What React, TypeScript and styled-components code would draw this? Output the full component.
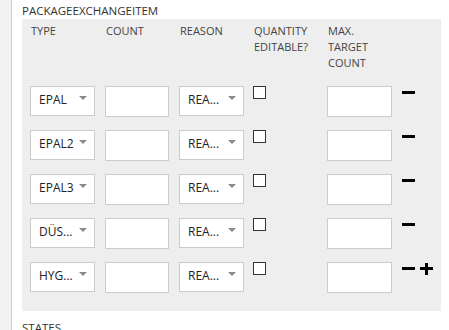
import React from "react";
import styled, { createGlobalStyle } from "styled-components";

const GlobalStyle = createGlobalStyle`
  html, body { margin: 0; padding: 0; background: #ffffff; }
  body { font-family: "Open Sans", "Noto Sans", sans-serif; color: #333; }
`;

const Page = styled.div`
  display: flex;
  width: 449px;
  height: 330px;
  overflow: hidden;
`;

const SideStrip = styled.div`
  width: 11px;
  flex: none;
  background: #f2f2f2;
  border-right: 1px solid #cfcfcf;
`;

const Content = styled.div`
  flex: 1;
  padding: 3px 0 0 10px;
  display: flex;
  flex-direction: column;
`;

const SectionTitle = styled.div`
  font-size: 11.5px;
  line-height: 16px;
  height: 18px;
  color: #333;
  text-transform: uppercase;
  letter-spacing: 0;
`;

const Panel = styled.div`
  width: 411px;
  background: #eeeeee;
  padding: 4px 0 18px 8px;
  margin-bottom: 9px;
`;

const Grid = styled.div`
  display: grid;
  grid-template-columns: 75px 74px 74px 74px 75px 1fr;
  row-gap: 13px;
  align-items: start;
`;

const HeaderCell = styled.div`
  font-size: 11px;
  line-height: 16px;
  color: #444;
  text-transform: uppercase;
  padding-left: 1px;
  height: 48px;
  margin-bottom: 2px;
`;

const Select = styled.div`
  box-sizing: border-box;
  width: 65px;
  height: 30px;
  background: #fff;
  border: 1px solid #cccccc;
  display: flex;
  align-items: center;
  padding: 0 7px 2px 8px;
`;

const SelectText = styled.span`
  flex: 1;
  font-size: 12px;
  line-height: 16px;
  color: #222;
  white-space: nowrap;
  overflow: hidden;
`;

const Arrow = styled.span`
  flex: none;
  width: 0;
  height: 0;
  border-left: 4px solid transparent;
  border-right: 4px solid transparent;
  border-top: 4px solid #8a8a8a;
  margin-bottom: 4px;
`;

const TextInput = styled.input<{ $w: number }>`
  box-sizing: border-box;
  width: ${(p) => p.$w}px;
  height: 31px;
  margin: 0;
  padding: 0 6px;
  background: #fff;
  border: 1px solid #cccccc;
  border-radius: 0;
  outline: none;
  font-family: inherit;
  font-size: 12px;
`;

const CheckBox = styled.span`
  display: block;
  box-sizing: border-box;
  width: 13px;
  height: 13px;
  background: #fff;
  border: 1px solid #333;
`;

const Actions = styled.div`
  display: flex;
  gap: 5px;
  padding-top: 1px;
`;

const IconButton = styled.span`
  display: block;
  width: 13px;
  height: 12px;
  cursor: pointer;
  line-height: 0;
`;

const MinusIcon = () => (
  <svg width="13" height="12" viewBox="0 0 13 12">
    <rect x="0" y="4" width="13" height="3" fill="#000" />
  </svg>
);

const PlusIcon = () => (
  <svg width="13" height="12" viewBox="0 0 13 12">
    <rect x="0" y="4" width="13" height="3" fill="#000" />
    <rect x="5" y="0" width="3" height="12" fill="#000" />
  </svg>
);

const rows = ["EPAL", "EPAL2", "EPAL3", "DÜS...", "HYG..."];

export default function App() {
  return (
    <Page>
      <GlobalStyle />
      <SideStrip />
      <Content>
        <SectionTitle>PackageExchangeItem</SectionTitle>
        <Panel>
          <Grid>
            <HeaderCell>Type</HeaderCell>
            <HeaderCell>Count</HeaderCell>
            <HeaderCell>Reason</HeaderCell>
            <HeaderCell>
              Quantity
              <br />
              Editable?
            </HeaderCell>
            <HeaderCell>
              Max.
              <br />
              Target
              <br />
              Count
            </HeaderCell>
            <HeaderCell />
            {rows.map((label, i) => (
              <React.Fragment key={label}>
                <Select>
                  <SelectText>{label}</SelectText>
                  <Arrow />
                </Select>
                <TextInput $w={64} type="text" />
                <Select>
                  <SelectText>REA...</SelectText>
                  <Arrow />
                </Select>
                <CheckBox />
                <TextInput $w={65} type="text" />
                <Actions>
                  <IconButton>
                    <MinusIcon />
                  </IconButton>
                  {i === rows.length - 1 && (
                    <IconButton>
                      <PlusIcon />
                    </IconButton>
                  )}
                </Actions>
              </React.Fragment>
            ))}
          </Grid>
        </Panel>
        <SectionTitle>States</SectionTitle>
      </Content>
    </Page>
  );
}
